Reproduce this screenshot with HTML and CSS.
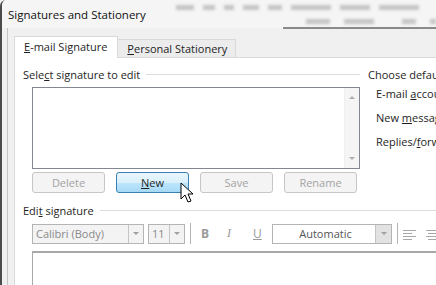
FILE: index.html
```html
<!DOCTYPE html>
<html lang="en">
<head>
    <meta charset="UTF-8">
    <meta name="viewport" content="width=device-width, initial-scale=1">
    <title>Signatures and Stationery</title>
    <link rel="stylesheet" href="styles.css">
</head>
<body>
    <div class="window">
        <div class="titlebar">
            <span class="title">Signatures and Stationery</span>
            <div class="ribbon-blur">
                <div class="blob-row top">
                    <span class="blob w18"></span><span class="blob w12"></span><span class="blob w10"></span>
                    <span class="blob w16"></span><span class="blob w14"></span>
                    <span class="blob w40"></span><span class="blob w30"></span><span class="blob w40"></span>
                </div>
                <div class="blob-row bottom">
                    <span class="blob w24"></span><span class="blob w30"></span><span class="blob w14 gap"></span><span class="blob w10"></span>
                </div>
            </div>
        </div>
        <div class="dialog">
            <div class="tabs">
                <div class="tab active"><u>E</u>-mail Signature</div>
                <div class="tab"><u>P</u>ersonal Stationery</div>
            </div>
            <div class="panel">
                <div class="top-row">
                    <div class="left-col">
                        <div class="group-label"><span>Sele<u>c</u>t signature to edit</span><span class="rule"></span></div>
                        <div class="list-box">
                            <div class="scrollbar">
                                <span class="arrow up"></span>
                                <span class="arrow down"></span>
                            </div>
                        </div>
                        <div class="button-row">
                            <button class="btn" disabled>Delete</button>
                            <button class="btn primary"><u>N</u>ew</button>
                            <button class="btn" disabled>Save</button>
                            <button class="btn" disabled>Rename</button>
                        </div>
                    </div>
                    <div class="right-col">
                        <div class="group-label"><span>Choose default signature</span></div>
                        <div class="default-row">E-mail <u>a</u>ccount:</div>
                        <div class="default-row">New <u>m</u>essages:</div>
                        <div class="default-row">Replies/<u>f</u>orwards:</div>
                    </div>
                </div>
                <div class="group-label edit-label"><span>Edi<u>t</u> signature</span><span class="rule"></span></div>
                <div class="toolbar">
                    <div class="combo font-combo"><span class="combo-text">Calibri (Body)</span><span class="combo-arrow"></span></div>
                    <div class="combo size-combo"><span class="combo-text">11</span><span class="combo-arrow"></span></div>
                    <span class="tb-sep"></span>
                    <span class="tb-btn bold">B</span>
                    <span class="tb-btn italic">I</span>
                    <span class="tb-btn under">U</span>
                    <div class="combo color-combo"><span class="combo-text">Automatic</span><span class="combo-arrow"></span></div>
                    <span class="tb-sep"></span>
                    <svg class="align-icon" width="16" height="12" viewBox="0 0 16 12">
                        <path d="M1 2.5h13M1 5.5h9M1 8.5h13M1 11.5h9" stroke="#a8a8a8" stroke-width="1"/>
                    </svg>
                    <svg class="align-icon" width="16" height="12" viewBox="0 0 16 12">
                        <path d="M1 2.5h13M3 5.5h9M1 8.5h13M3 11.5h9" stroke="#a8a8a8" stroke-width="1"/>
                    </svg>
                </div>
                <div class="editor"></div>
            </div>
        </div>
        <svg class="cursor" width="14" height="22" viewBox="0 0 14 22">
            <path d="M1 1v16l4-4 3 7 3-1-3-7h5z" fill="#fff" stroke="#000" stroke-width="1" stroke-linejoin="round"/>
        </svg>
    </div>
</body>
</html>
```

FILE: styles.css
```css
body {
    margin: 0;
    padding: 0;
    background-color: #f0f0f0;
    overflow: hidden;
}

.window {
    position: relative;
    width: 436px;
    height: 285px;
    border-left: 2px solid #4b4b4b;
    border-top-left-radius: 6px;
    box-sizing: border-box;
    background-color: #f0f0f0;
    font-family: 'Open Sans', sans-serif;
    font-size: 11px;
    color: #1e1e1e;
    overflow: hidden;
}

.titlebar {
    height: 28px;
    display: flex;
    align-items: center;
    background-color: #f5f5f5;
}

.title {
    padding-left: 6px;
    font-size: 11.5px;
    color: #111;
    white-space: nowrap;
    flex-shrink: 0;
}

.ribbon-blur {
    flex: 1;
    align-self: stretch;
    display: flex;
    flex-direction: column;
    justify-content: space-around;
    margin-left: 30px;
    filter: blur(1.5px);
    overflow: hidden;
}

.blob-row {
    display: flex;
    gap: 9px;
}

.blob {
    height: 5px;
    flex-shrink: 0;
    background-color: #c4c4c4;
}

.blob-row.bottom {
    padding-left: 130px;
    gap: 14px;
}

.blob.gap {
    margin-left: 14px;
}

.w10 { width: 10px; }
.w12 { width: 12px; }
.w14 { width: 14px; }
.w16 { width: 16px; }
.w18 { width: 18px; }
.w24 { width: 24px; }
.w30 { width: 30px; }
.w40 { width: 40px; }

.titlebar::after {
    content: "";
    position: absolute;
    left: 281px;
    top: 27px;
    width: 160px;
    height: 2px;
    background-color: #8a8a8a;
}

.dialog {
    margin-left: 5px;
    border-left: 1px solid #c4c4c4;
    padding: 8px 0 0 6px;
    height: 260px;
}

.tabs {
    display: flex;
    align-items: flex-end;
    height: 21px;
}

.tab {
    height: 18px;
    padding: 0 8px 0 9px;
    border: 1px solid #d9d9d9;
    border-bottom: none;
    background-color: #ececec;
    line-height: 17px;
    box-sizing: border-box;
    margin-left: -1px;
    white-space: nowrap;
}

.tab.active {
    height: 22px;
    margin-left: 0;
    margin-bottom: -1px;
    background-color: #fff;
    padding-right: 10px;
    line-height: 19px;
    position: relative;
    z-index: 1;
}

.panel {
    background-color: #fff;
    border: 1px solid #d9d9d9;
    padding: 8px 0 0 8px;
    height: 240px;
    width: 460px;
}

.top-row {
    display: flex;
    gap: 8px;
}

.left-col {
    width: 337px;
    flex-shrink: 0;
}

.group-label {
    display: flex;
    align-items: center;
    gap: 6px;
    height: 16px;
    white-space: nowrap;
}

.rule {
    flex: 1;
    border-top: 1px solid #dcdcdc;
}

.list-box {
    margin: 5px 0 0 9px;
    height: 82px;
    border: 1px solid #828790;
    box-sizing: border-box;
    display: flex;
    justify-content: flex-end;
}

.scrollbar {
    width: 14px;
    border-left: 1px solid #f0f0f0;
    background-color: #f5f5f5;
    display: flex;
    flex-direction: column;
    justify-content: space-between;
    align-items: center;
    padding: 8px 0 8px;
}

.arrow {
    width: 0;
    height: 0;
    border-left: 3px solid transparent;
    border-right: 3px solid transparent;
}

.arrow.up {
    border-bottom: 3px solid #b0b0b0;
}

.arrow.down {
    border-top: 3px solid #b0b0b0;
}

.button-row {
    display: flex;
    gap: 11px;
    margin: 3px 0 0 9px;
}

.btn {
    width: 73px;
    height: 21px;
    border: 1px solid #c6c6c6;
    border-radius: 3px;
    background-color: #f4f4f4;
    font-family: 'Open Sans', sans-serif;
    font-size: 11px;
    color: #a3a3a3;
    padding: 0;
}

.btn.primary {
    border-color: #3c7fb1;
    background: linear-gradient(#eaf6fd, #d9f0fc 50%, #bee6fd 51%, #a7d9f5);
    color: #1e1e1e;
}

.right-col {
    flex: 1;
    white-space: nowrap;
    overflow: hidden;
}

.default-row {
    margin: 4px 0 0 8px;
    height: 20px;
    line-height: 20px;
}

.group-label + .default-row {
    margin-top: 2px;
}

.edit-label {
    margin-top: 9px;
}

.toolbar {
    display: flex;
    align-items: center;
    margin: 5px 0 0 9px;
    height: 21px;
}

.combo {
    display: flex;
    height: 20px;
    border: 1px solid #b4b4b4;
    box-sizing: border-box;
    background-color: #f3f3f3;
    color: #8a8a8a;
    flex-shrink: 0;
}

.combo-text {
    flex: 1;
    line-height: 18px;
    padding-left: 3px;
}

.combo-arrow {
    width: 14px;
    border-left: 1px solid #c4c4c4;
    display: flex;
    align-items: center;
    justify-content: center;
}

.combo-arrow::after {
    content: "";
    border-left: 3px solid transparent;
    border-right: 3px solid transparent;
    border-top: 3px solid #a0a0a0;
}

.font-combo {
    width: 112px;
}

.size-combo {
    width: 37px;
    margin-left: 4px;
}

.tb-sep {
    width: 1px;
    height: 21px;
    background-color: #b4b4b4;
    margin: 0 4px 0 5px;
    flex-shrink: 0;
}

.tb-btn {
    width: 26px;
    color: #9a9a9a;
    font-size: 12px;
    padding-left: 6px;
    box-sizing: border-box;
    flex-shrink: 0;
}

.bold {
    font-weight: bold;
}

.italic {
    font-style: italic;
    font-family: 'Liberation Serif', serif;
}

.under {
    text-decoration: underline;
}

.color-combo {
    width: 120px;
    margin-left: -1px;
    background-color: #fff;
    color: #555;
}

.color-combo .combo-text {
    text-align: center;
}

.color-combo .combo-arrow {
    width: 15px;
    background-color: #e2e2e2;
}

.align-icon {
    margin-right: 7px;
    flex-shrink: 0;
}

.editor {
    margin: 7px 0 0 9px;
    height: 60px;
    border-top: 2px solid #a8a8a8;
    border-left: 1px solid #a8a8a8;
}

.cursor {
    position: absolute;
    left: 178px;
    top: 182px;
}
```
